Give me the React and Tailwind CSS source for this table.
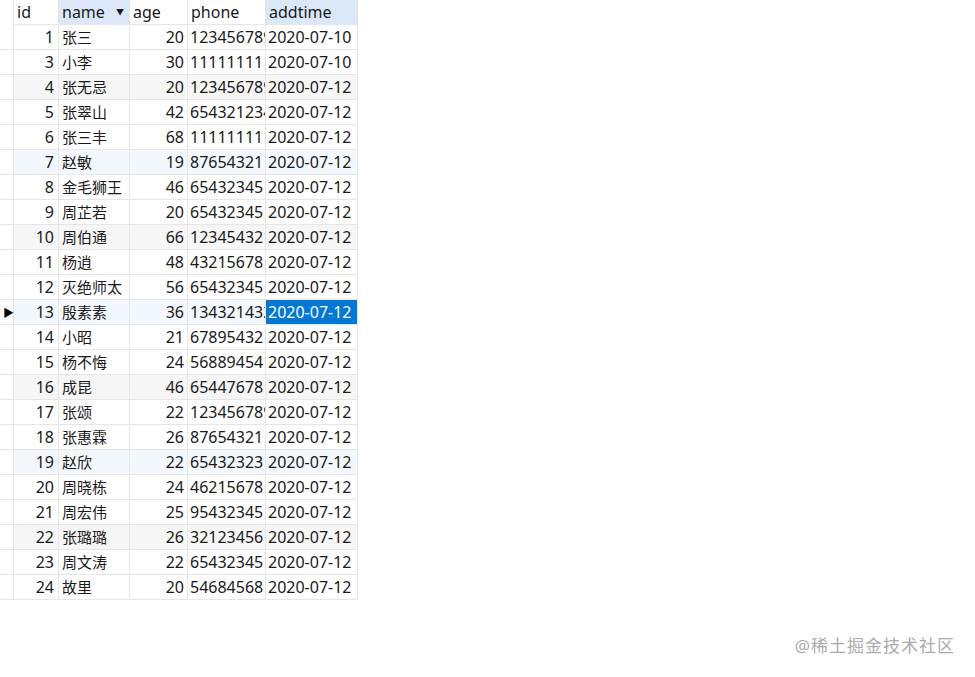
import React from "react";

const rows = [
  [1, "张三", 20, "12345678901", "2020-07-10"],
  [3, "小李", 30, "11111111111", "2020-07-10"],
  [4, "张无忌", 20, "12345678901", "2020-07-12"],
  [5, "张翠山", 42, "65432123456", "2020-07-12"],
  [6, "张三丰", 68, "11111111111", "2020-07-12"],
  [7, "赵敏", 19, "87654321", "2020-07-12"],
  [8, "金毛狮王", 46, "65432345", "2020-07-12"],
  [9, "周芷若", 20, "65432345", "2020-07-12"],
  [10, "周伯通", 66, "12345432123", "2020-07-12"],
  [11, "杨逍", 48, "43215678", "2020-07-12"],
  [12, "灭绝师太", 56, "65432345", "2020-07-12"],
  [13, "殷素素", 36, "13432143214", "2020-07-12"],
  [14, "小昭", 21, "67895432", "2020-07-12"],
  [15, "杨不悔", 24, "56889454", "2020-07-12"],
  [16, "成昆", 46, "65447678", "2020-07-12"],
  [17, "张颂", 22, "12345678901", "2020-07-12"],
  [18, "张惠霖", 26, "87654321", "2020-07-12"],
  [19, "赵欣", 22, "65432323", "2020-07-12"],
  [20, "周晓栋", 24, "46215678", "2020-07-12"],
  [21, "周宏伟", 25, "95432345", "2020-07-12"],
  [22, "张璐璐", 26, "32123456", "2020-07-12"],
  [23, "周文涛", 22, "65432345", "2020-07-12"],
  [24, "故里", 20, "54684568", "2020-07-12"],
];

const cell = "h-[25px] border-r border-b border-[#e6e6e6] overflow-hidden whitespace-nowrap leading-[24px]";

function rowTint(i) {
  if (i % 3 !== 2) return "bg-white";
  return i % 6 === 2 ? "bg-[#f6f6f6]" : "bg-[#f3f8fe]";
}

export default function App() {
  return (
    <div
      className="relative w-[975px] h-[677px] bg-white text-[16px] text-[#1a1a1a]"
      style={{ fontFamily: '"Noto Sans", "Noto Sans CJK SC", sans-serif' }}
    >
      <div className="flex w-fit">
        <div className="w-[14px] h-[25px] border-r border-[#e6e6e6]" />
        <div className={`${cell} w-[45px] pl-[3px]`}>id</div>
        <div className={`${cell} w-[71px] pl-[3px] bg-[#dae8f8] flex items-center justify-between pr-[4px]`}>
          <span>name</span>
          <span className="text-[8px] mr-[1px]">▼</span>
        </div>
        <div className={`${cell} w-[58px] pl-[3px]`}>age</div>
        <div className={`${cell} w-[78px] pl-[3px]`}>phone</div>
        <div className={`${cell} w-[92px] pl-[3px] bg-[#dae8f8]`}>addtime</div>
      </div>
      {rows.map((r, i) => {
        const sel = r[0] === 13;
        return (
          <div key={r[0]} className={`flex w-fit ${rowTint(i)}`}>
            <div className="w-[14px] h-[25px] border-r border-b border-[#e6e6e6] bg-white flex items-center pl-[3px]">
              {sel && <span className="text-[11px] leading-none text-black">▶</span>}
            </div>
            <div className={`${cell} w-[45px] text-right pr-[4px]`}>{r[0]}</div>
            <div className={`${cell} w-[71px] pl-[3px] text-[15px]`}>{r[1]}</div>
            <div className={`${cell} w-[58px] text-right pr-[3px]`}>{r[2]}</div>
            <div className={`${cell} w-[78px] pl-[2px]`}>{r[3]}</div>
            <div className={`${cell} w-[92px] pl-[2px] ${sel ? "bg-[#0078d7] text-white" : ""}`}>{r[4]}</div>
          </div>
        );
      })}
      <div className="absolute right-[20px] top-[633px] text-[17px] text-[#ababab] tracking-[1px]">
        @稀土掘金技术社区
      </div>
    </div>
  );
}
